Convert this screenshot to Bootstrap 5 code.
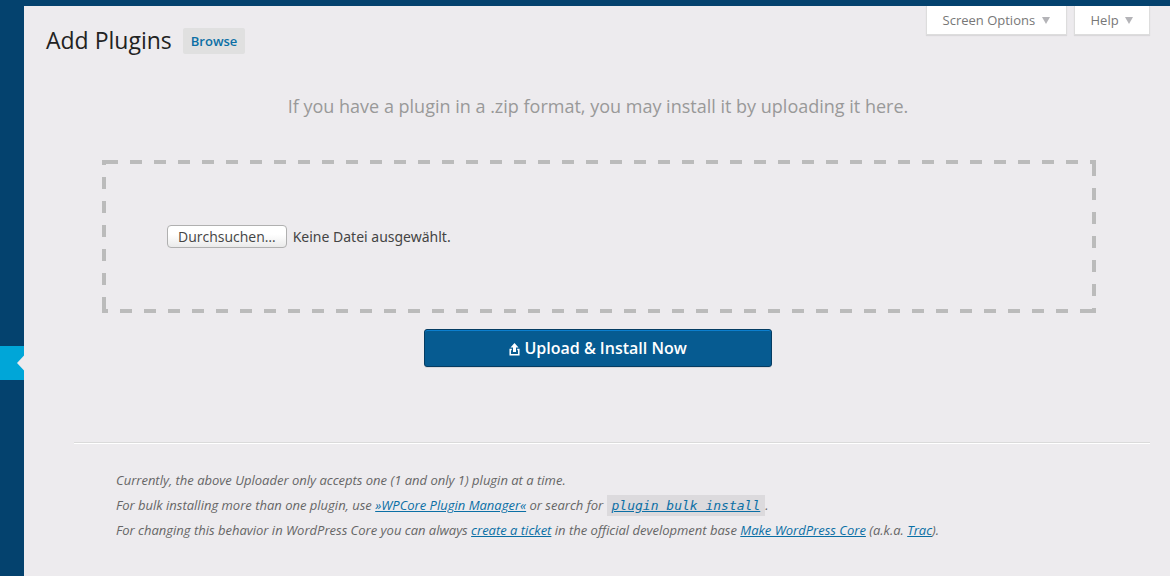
<!DOCTYPE html>
<html lang="en">
<head>
<meta charset="utf-8">
<meta name="viewport" content="width=device-width, initial-scale=1">
<title>Add Plugins</title>
<link href="https://cdn.jsdelivr.net/npm/bootstrap@5.3.0/dist/css/bootstrap.min.css" rel="stylesheet">
<style>
  body { background: #edebee; color: #444; font: 13px/18px "Open Sans", sans-serif; }
  a { color: #0b6fa5; }
  .admin-bar { height: 6px; background: #04426e; }
  .side-menu { width: 24px; background: #04426e; padding-top: 340px; }
  .side-current { display: block; height: 34px; background: #00a6d8; }
  .side-current svg { display: block; margin-left: auto; }
  .page-area { padding: 0 20px 0 22px; }
  .page-title { font-size: 23px; line-height: 30px; color: #222; margin: 19px 0 0; }
  .title-row { gap: 11px; }
  .browse-link { font-weight: 600; line-height: 18px; padding: 4px 8px; margin-top: 22px; background: #e0e0e0; border-radius: 2px; }
  .tab-row { gap: 7px; }
  .screen-tab { --bs-btn-padding-x: 16px; --bs-btn-padding-y: 4px; --bs-btn-font-size: 13px; --bs-btn-line-height: 20px; --bs-btn-color: #777; --bs-btn-bg: #fff; --bs-btn-border-color: #ddd; --bs-btn-border-radius: 0; border-top: 0; box-shadow: 0 1px 1px rgba(0,0,0,.08); }
  .screen-tab svg { margin: 0 0 2px 3px; }
  .upload-help { font-size: 18px; line-height: 24px; color: #999; margin: 39px 0 42px; }
  .drop-zone {
    --dash: transparent 0 4px, #bbb 4px 16px, transparent 16px 24px;
    margin: 0 54px 0 56px; padding: 65px; height: 153px;
    background:
      repeating-linear-gradient(to right, var(--dash)) top / 100% 4px no-repeat,
      repeating-linear-gradient(to bottom, var(--dash)) right / 4px 100% no-repeat,
      repeating-linear-gradient(to left, var(--dash)) bottom / 100% 4px no-repeat,
      repeating-linear-gradient(to bottom, #bbb 0 5px, transparent 5px 17px, #bbb 17px 24px) left / 4px 100% no-repeat;
  }
  .file-pick { --bs-btn-padding-x: 10px; --bs-btn-padding-y: 0; --bs-btn-font-size: 14px; --bs-btn-line-height: 21px; --bs-btn-color: #444; --bs-btn-border-radius: 4px; --bs-btn-border-color: #b0b0b0; font-family: "Open Sans", sans-serif; background: linear-gradient(#fff 40%, #eaeaea); }
  .file-state { font-family: "Noto Sans", sans-serif; font-size: 14px; line-height: 23px; margin-left: 6px; }
  .upload-btn { --bs-btn-padding-y: 6px; --bs-btn-font-size: 16px; --bs-btn-line-height: 24px; --bs-btn-font-weight: 600; --bs-btn-color: #fff; --bs-btn-bg: #065b91; --bs-btn-border-color: #053c62; --bs-btn-border-radius: 3px; width: 348px; margin-top: 16px; box-shadow: inset 0 1px 0 #0b7fcf, 0 1px 0 rgba(0,0,0,.08); }
  .rule-line { margin: 75px 0 0 28px; border: 0; border-top: 1px solid #dadada; border-bottom: 1px solid #fff; opacity: 1; }
  .notes { margin: 24px 0 0 70px; line-height: 25px; font-style: italic; color: #666; }
  .notes code { font: italic 13px/18px "DejaVu Sans Mono", monospace; color: inherit; padding: 3px 5px; background: #dcdadd; }
</style>
</head>
<body>
<div class="d-flex flex-column min-vh-100">
  <header class="admin-bar"></header>
  <div class="d-flex flex-grow-1">
    <nav class="side-menu flex-shrink-0" aria-label="Admin menu">
      <a class="side-current" href="#" aria-label="Plugins"><svg width="8" height="34" viewBox="0 0 8 34"><path d="M8 9.500L1 17L8 24.500Z" fill="#edebee"/></svg></a>
    </nav>
    <main class="page-area flex-grow-1">
      <div class="d-flex justify-content-between align-items-start">
        <div class="title-row d-flex align-items-start">
          <h1 class="page-title fw-normal">Add Plugins</h1>
          <a class="browse-link text-decoration-none" href="#">Browse</a>
        </div>
        <div class="tab-row d-flex">
          <button class="btn screen-tab" type="button">Screen Options <svg width="8" height="7" viewBox="0 0 8 7"><path d="M0 0H8L4 7Z" fill="#b4b4b8"/></svg></button>
          <button class="btn screen-tab" type="button">Help <svg width="8" height="7" viewBox="0 0 8 7"><path d="M0 0H8L4 7Z" fill="#b4b4b8"/></svg></button>
        </div>
      </div>
      <form>
        <p class="upload-help text-center">If you have a plugin in a .zip format, you may install it by uploading it here.</p>
        <div class="drop-zone d-flex align-items-start">
          <input class="visually-hidden" type="file" id="pluginzip">
          <label class="btn file-pick" for="pluginzip">Durchsuchen…</label>
          <span class="file-state">Keine Datei ausgewählt.</span>
        </div>
        <div class="text-center">
          <button class="btn upload-btn" type="button"><svg width="11" height="14" viewBox="0 0 11 14" fill="#fff" aria-hidden="true"><path d="M5.500 0L9.500 4.500H7V9H4V4.500H1.500Z"/><path d="M2.800 6.500H1.200V11.800H9.800V6.500H8.200" fill="none" stroke="#fff" stroke-width="1.500"/></svg> Upload &amp; Install Now</button>
        </div>
      </form>
      <hr class="rule-line">
      <div class="notes">
        <div>Currently, the above Uploader only accepts one (1 and only 1) plugin at a time.</div>
        <div>For bulk installing more than one plugin, use <a href="#">»WPCore Plugin Manager«</a> or search for <a href="#"><code>plugin bulk install</code></a>.</div>
        <div>For changing this behavior in WordPress Core you can always <a href="#">create a ticket</a> in the official development base <a href="#">Make WordPress Core</a> (a.k.a. <a href="#">Trac</a>).</div>
      </div>
    </main>
  </div>
</div>
<script src="https://cdn.jsdelivr.net/npm/bootstrap@5.3.0/dist/js/bootstrap.bundle.min.js"></script>
</body>
</html>
